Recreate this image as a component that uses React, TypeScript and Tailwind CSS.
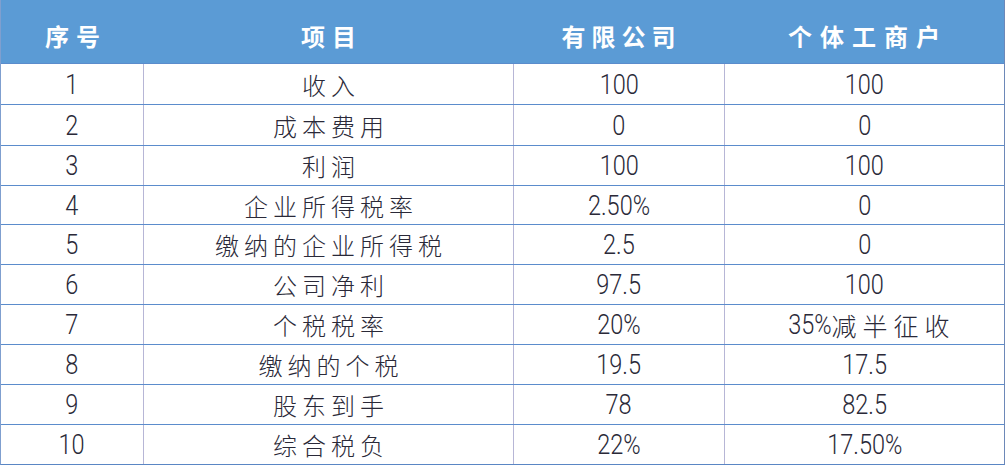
import React from "react";

const rows: [string, string, string, string][] = [
  ["1", "收入", "100", "100"],
  ["2", "成本费用", "0", "0"],
  ["3", "利润", "100", "100"],
  ["4", "企业所得税率", "2.50%", "0"],
  ["5", "缴纳的企业所得税", "2.5", "0"],
  ["6", "公司净利", "97.5", "100"],
  ["7", "个税税率", "20%", "35%减半征收"],
  ["8", "缴纳的个税", "19.5", "17.5"],
  ["9", "股东到手", "78", "82.5"],
  ["10", "综合税负", "22%", "17.50%"],
];

const heights = [
  "h-[41px]",
  "h-[41px]",
  "h-[40px]",
  "h-[39px]",
  "h-[40px]",
  "h-[40px]",
  "h-[40px]",
  "h-[40px]",
  "h-[40px]",
  "h-[40px]",
];

function Num({ v }: { v: string }) {
  return (
    <span className="inline-block text-[28px] leading-none font-light font-['Roboto','Liberation_Sans',sans-serif] scale-x-[0.84]">
      {v}
    </span>
  );
}

function Cjk({ v }: { v: string }) {
  return (
    <span className="text-[24px] leading-none font-light tracking-[5px] mr-[-5px] font-['Noto_Sans_CJK_SC',sans-serif]">
      {v}
    </span>
  );
}

function Cell({ v, last }: { v: string; last?: boolean }) {
  let content: React.ReactNode;
  if (v === "35%减半征收") {
    content = (
      <span className="flex items-center leading-none">
        <span className="inline-block text-[28px] leading-none font-light font-['Roboto','Liberation_Sans',sans-serif] scale-x-[0.84] origin-right">
          35%
        </span>
        <span className="text-[25px] leading-none font-light tracking-[6px] mr-[-6px] font-['Noto_Sans_CJK_SC',sans-serif]">
          减半征收
        </span>
      </span>
    );
  } else if (/^[0-9.%]+$/.test(v)) {
    content = <Num v={v} />;
  } else {
    content = <Cjk v={v} />;
  }
  return (
    <div
      className={
        "flex items-center justify-center pt-[1px] " +
        (last ? "" : "border-r border-[#b7b6d6]")
      }
    >
      {content}
    </div>
  );
}

export default function App() {
  return (
    <div className="w-[1008px] h-[466px] bg-white font-['Noto_Sans_CJK_SC',sans-serif]">
      <div className="w-[1005px] border-l border-r border-b border-l-[#7f9fcf] border-r-[#6d88b8] border-b-[#5a86c4]">
        <div className="grid grid-cols-[143px_369px_211px_280px] h-[63px] bg-[#5b9bd5] text-white font-bold text-[24px] leading-none">
          <div className="flex items-center justify-center pt-[9px]">
            <span className="tracking-[7px] mr-[-7px]">序号</span>
          </div>
          <div className="flex items-center justify-center pt-[9px]">
            <span className="tracking-[7px] mr-[-7px]">项目</span>
          </div>
          <div className="flex items-center justify-center pt-[9px]">
            <span className="tracking-[6px] mr-[-6px]">有限公司</span>
          </div>
          <div className="flex items-center justify-center pt-[9px]">
            <span className="tracking-[8px] mr-[-8px]">个体工商户</span>
          </div>
        </div>
        {rows.map((r, i) => (
          <div
            key={i}
            className={
              "grid grid-cols-[143px_370px_211px_279px] border-t border-[#5b8ccc] text-[#2a2938] " +
              heights[i]
            }
          >
            <Cell v={r[0]} />
            <Cell v={r[1]} />
            <Cell v={r[2]} />
            <Cell v={r[3]} last />
          </div>
        ))}
      </div>
    </div>
  );
}
